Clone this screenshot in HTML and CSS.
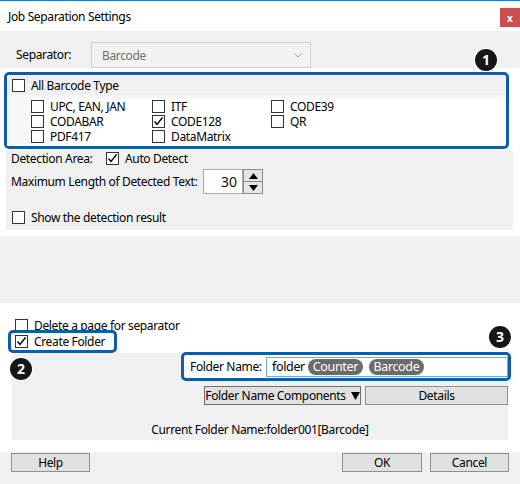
FILE: index.html
```html
<!DOCTYPE html>
<html>
<head>
<meta charset="utf-8">
<link rel="stylesheet" href="styles.css">
</head>
<body>
<div class="window">
  <div class="titlebar">
    <span class="title">Job Separation Settings</span>
    <span class="close">x</span>
  </div>

  <div class="sep-row">
    <span class="sep-label">Separator:</span>
    <div class="combo">
      <span>Barcode</span>
      <svg class="chev" width="8" height="5" viewBox="0 0 8 5"><polyline points="0.5,0.5 4,4 7.5,0.5" fill="none" stroke="#a8a8a8" stroke-width="1"/></svg>
    </div>
  </div>

  <div class="top-section">
    <div class="hl group">
      <div class="group-head">
        <label class="cb"><span class="box"></span>All Barcode Type</label>
      </div>
      <div class="group-list">
        <div class="grid">
          <label class="cb"><span class="box"></span>UPC, EAN, JAN</label>
          <label class="cb"><span class="box"></span>ITF</label>
          <label class="cb"><span class="box"></span>CODE39</label>
          <label class="cb"><span class="box"></span>CODABAR</label>
          <label class="cb"><span class="box"><svg width="11" height="11" viewBox="0 0 11 11"><polyline points="1.5,5.5 4,8.5 9.5,1.5" fill="none" stroke="#000" stroke-width="1.4"/></svg></span>CODE128</label>
          <label class="cb"><span class="box"></span>QR</label>
          <label class="cb"><span class="box"></span>PDF417</label>
          <label class="cb"><span class="box"></span>DataMatrix</label>
        </div>
      </div>
    </div>

    <div class="options">
      <div class="opt-row det">
        <span class="lbl-det">Detection Area:</span>
        <label class="cb"><span class="box"><svg width="11" height="11" viewBox="0 0 11 11"><polyline points="1.5,5.5 4,8.5 9.5,1.5" fill="none" stroke="#000" stroke-width="1.4"/></svg></span>Auto Detect</label>
      </div>
      <div class="opt-row max">
        <span class="lbl-max">Maximum Length of Detected Text:</span>
        <div class="spin">
          <span class="spin-val">30</span>
          <div class="spin-btns">
            <span class="spin-btn"><svg width="9" height="6" viewBox="0 0 9 6"><polygon points="4.5,0 9,6 0,6" fill="#000"/></svg></span>
            <span class="spin-btn"><svg width="9" height="6" viewBox="0 0 9 6"><polygon points="0,0 9,0 4.5,6" fill="#000"/></svg></span>
          </div>
        </div>
      </div>
      <div class="opt-row show">
        <label class="cb"><span class="box"></span>Show the detection result</label>
      </div>
    </div>
  </div>

  <div class="spacer"></div>

  <div class="bottom-section">
    <label class="cb delete"><span class="box"></span>Delete a page for separator</label>
    <div class="hl create">
      <label class="cb"><span class="box"><svg width="11" height="11" viewBox="0 0 11 11"><polyline points="1.5,5.5 4,8.5 9.5,1.5" fill="none" stroke="#000" stroke-width="1.4"/></svg></span>Create Folder</label>
    </div>
    <div class="folder-panel">
      <div class="hl fname">
        <span class="fname-label">Folder Name:</span>
        <div class="fname-input">
          <span class="fname-text">folder</span>
          <span class="pill">Counter</span>
          <span class="pill">Barcode</span>
        </div>
      </div>
      <div class="btn-row">
        <button class="btn comp">Folder Name Components <svg width="9" height="8" viewBox="0 0 9 8"><polygon points="0,0 9,0 4.5,8" fill="#000"/></svg></button>
        <button class="btn details">Details</button>
      </div>
      <div class="current">Current Folder Name:folder001[Barcode]</div>
    </div>
  </div>

  <div class="footer">
    <button class="btn help">Help</button>
    <div class="footer-right">
      <button class="btn ok">OK</button>
      <button class="btn cancel">Cancel</button>
    </div>
  </div>

  <span class="badge b1">1</span>
  <span class="badge b2">2</span>
  <span class="badge b3">3</span>
</div>
</body>
</html>
```

FILE: styles.css
```css
* { box-sizing: border-box; }

html, body {
  margin: 0;
  padding: 0;
  background: #f0f0f0;
}

body {
  font-family: "Noto Sans", "Open Sans", sans-serif;
  font-size: 12px;
  letter-spacing: -0.35px;
  color: #000;
  white-space: nowrap;
}

.window {
  position: relative;
  width: 520px;
  height: 484px;
  background: #f0f0f0;
  border-top: 1px solid #1f7ad1;
  overflow: hidden;
}

.titlebar {
  height: 30px;
  background: #fff;
  display: flex;
  align-items: center;
  padding-left: 8px;
}

.close {
  margin-left: auto;
  align-self: flex-start;
  margin-top: 7px;
  width: 20px;
  height: 19px;
  background: #c9504f;
  color: #fff;
  font-size: 10px;
  font-weight: bold;
  letter-spacing: 0;
  display: flex;
  align-items: center;
  justify-content: center;
  line-height: 1;
}

.sep-row {
  height: 37px;
  padding-top: 11px;
  padding-left: 16px;
  display: flex;
  align-items: flex-start;
}

.sep-label {
  width: 75px;
  line-height: 26px;
}

.combo {
  width: 220px;
  height: 26px;
  border: 1px solid #d0d0d0;
  background: #f2f2f2;
  color: #6e6e6e;
  display: flex;
  align-items: center;
  padding-left: 10px;
  padding-right: 8px;
}

.chev {
  margin-left: auto;
}

.top-section {
  background: #fff;
  padding: 4px 0 6px 0;
  height: 168px;
}

.hl {
  border: 3px solid #0f5ca8;
  border-radius: 5px;
  background: #fff;
}

.group {
  margin-left: 4px;
  width: 505px;
  height: 77px;
}

.group-head {
  margin: 1px 1px 0 0;
  height: 19px;
  background: #f0f0f0;
  padding-left: 5px;
  display: flex;
  align-items: center;
}

.group-list {
  height: 51px;
  padding-left: 22px;
  padding-top: 4px;
  background: #f7f7f7;
  margin-right: 1px;
}

.grid {
  height: 46px;
  padding-left: 2px;
  background: #fff;
  display: grid;
  grid-template-columns: 121px 119px auto;
  grid-auto-rows: 15px;
  align-items: center;
  line-height: 15px;
}

.cb {
  display: flex;
  align-items: center;
  gap: 6px;
  line-height: 15px;
}

.box {
  width: 13px;
  height: 13px;
  border: 1px solid #333;
  background: #fff;
  display: flex;
  align-items: center;
  justify-content: center;
  flex: 0 0 13px;
}

.options {
  margin-top: 1px;
  margin-left: 6px;
  width: 507px;
  height: 80px;
  background: #f0f0f0;
  padding-left: 5px;
}

.opt-row {
  display: flex;
  align-items: center;
}

.det {
  height: 16px;
}

.lbl-det {
  width: 95px;
}

.max {
  margin-top: 2px;
  height: 27px;
}

.lbl-max {
  width: 192px;
}

.spin {
  display: flex;
  height: 25px;
}

.spin-val {
  width: 40px;
  height: 25px;
  border: 1px solid #a9a9a9;
  background: #fff;
  text-align: right;
  padding-right: 5px;
  font-size: 14px;
  letter-spacing: 0;
  line-height: 23px;
  color: #111;
}

.spin-btns {
  width: 20px;
  display: flex;
  flex-direction: column;
}

.spin-btn {
  flex: 1;
  border: 1px solid #8c8c8c;
  background: #e6e6e6;
  display: flex;
  align-items: center;
  justify-content: center;
}

.spin-btn + .spin-btn {
  border-top: none;
}

.show {
  margin-top: 14px;
  height: 16px;
  padding-left: 1px;
}

.spacer {
  height: 67px;
  background: #f0f0f0;
}

.bottom-section {
  background: #fff;
  height: 149px;
  padding-top: 15px;
}

.delete {
  height: 14px;
  padding-left: 15px;
}

.create {
  position: relative;
  margin-top: -2px;
  margin-left: 8px;
  width: 109px;
  height: 23px;
  padding-left: 4px;
  display: flex;
  align-items: center;
}

.folder-panel {
  position: relative;
  margin-left: 12px;
  width: 496px;
  height: 87px;
  background: #f0f0f0;
}

.fname {
  position: relative;
  top: -1px;
  margin-left: 169px;
  width: 330px;
  height: 29px;
  display: flex;
  align-items: center;
  padding-left: 6px;
}

.fname-input {
  margin-left: auto;
  width: 242px;
  height: 20px;
  border: 1px solid #6fa8e0;
  background: #fff;
  display: flex;
  align-items: center;
  padding-left: 5px;
  font-size: 12.5px;
}

.fname-text {
  margin-right: 3px;
}

.pill {
  height: 16px;
  width: 55px;
  border-radius: 8px;
  background: #6b6b6b;
  color: #fff;
  display: flex;
  align-items: center;
  justify-content: center;
  margin-right: 6px;
  font-size: 12.5px;
}

.btn-row {
  display: flex;
  margin-top: 4px;
  padding-left: 192px;
  gap: 4px;
}

.btn {
  font-family: "Noto Sans", "Open Sans", sans-serif;
  font-size: 12px;
  letter-spacing: -0.35px;
  color: #000;
  height: 19px;
  background: #e1e1e1;
  border: 1px solid #8f8f8f;
  padding: 0;
  display: flex;
  align-items: center;
  justify-content: center;
  white-space: nowrap;
}

.comp {
  width: 157px;
  gap: 5px;
  border-color: #6e6e6e;
}

.details {
  width: 143px;
}

.current {
  margin-top: 16px;
  height: 16px;
  text-align: center;
}

.footer {
  height: 32px;
  padding-top: 1px;
  display: flex;
  align-items: flex-start;
  padding-left: 11px;
  padding-right: 11px;
}

.help {
  width: 79px;
}

.footer-right {
  margin-left: auto;
  display: flex;
  gap: 8px;
}

.ok {
  width: 80px;
}

.cancel {
  width: 79px;
}

.badge {
  position: absolute;
  width: 22px;
  height: 22px;
  border-radius: 50%;
  background: #161616;
  color: #fff;
  font-weight: bold;
  font-size: 14px;
  letter-spacing: 0;
  display: flex;
  align-items: center;
  justify-content: center;
  box-shadow: 0 0 0 1px #fff;
  line-height: 1;
}

.b1 { left: 475px; top: 48px; }
.b2 { left: 10px; top: 357px; }
.b3 { left: 489px; top: 325px; }
```
